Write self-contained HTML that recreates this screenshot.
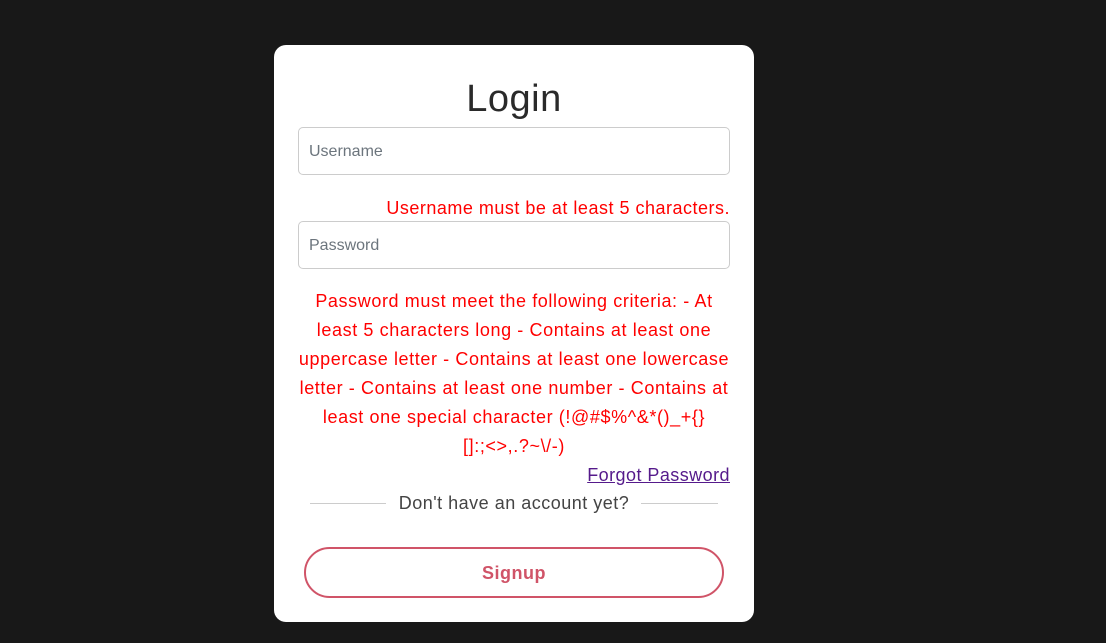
<!DOCTYPE html>
<html><head><meta charset="utf-8"><style>
*{margin:0;padding:0;box-sizing:border-box}
body{width:1106px;height:643px;background:#181818;font-family:"Liberation Sans",sans-serif;position:relative;overflow:hidden}
.card{position:absolute;left:274px;top:45px;width:480px;height:577px;background:#fff;border-radius:12px}
.a{position:absolute}
h1{position:absolute;left:0;width:480px;top:32px;text-align:center;font-weight:400;font-size:38px;color:#2a2a2a;line-height:44px;letter-spacing:0.5px}
.inp{position:absolute;left:24px;width:432px;height:48px;border:1px solid #ccc;border-radius:5px;font-size:16px;color:#6c757d;padding:14px 10px;line-height:20px}
.err{color:#ff0000;font-size:18px;letter-spacing:0.5px}
.pw{position:absolute;left:0;width:480px;top:242px;text-align:center;line-height:29px;letter-spacing:0.6px}
</style></head><body>
<div class="card">
<h1>Login</h1>
<div class="inp" style="top:82px">Username</div>
<div class="a err" style="right:24px;top:152px;line-height:22px">Username must be at least 5 characters.</div>
<div class="inp" style="top:176px">Password</div>
<div class="err pw">Password must meet the following criteria: - At<br>least 5 characters long - Contains at least one<br>uppercase letter - Contains at least one lowercase<br>letter - Contains at least one number - Contains at<br>least one special character (!@#$%^&amp;*()_+{}<br>[]:;&lt;&gt;,.?~\/-)</div>
<div class="a" style="right:24px;top:419px;font-size:18px;line-height:22px;color:#551a8b;text-decoration:underline;letter-spacing:0.45px">Forgot Password</div>
<div class="a" style="left:36px;top:458px;width:76px;height:1px;background:#ccc"></div>
<div class="a" style="left:367px;top:458px;width:77px;height:1px;background:#ccc"></div>
<div class="a" style="left:0;width:480px;top:447px;text-align:center;font-size:18px;line-height:22px;color:#444;letter-spacing:0.5px">Don't have an account yet?</div>
<div class="a" style="left:30px;top:502px;width:420px;height:51px;border:2px solid #d05468;border-radius:26px;text-align:center;line-height:49px;font-weight:700;font-size:18px;color:#d05468;letter-spacing:0.5px">Signup</div>
</div>
</body></html>
